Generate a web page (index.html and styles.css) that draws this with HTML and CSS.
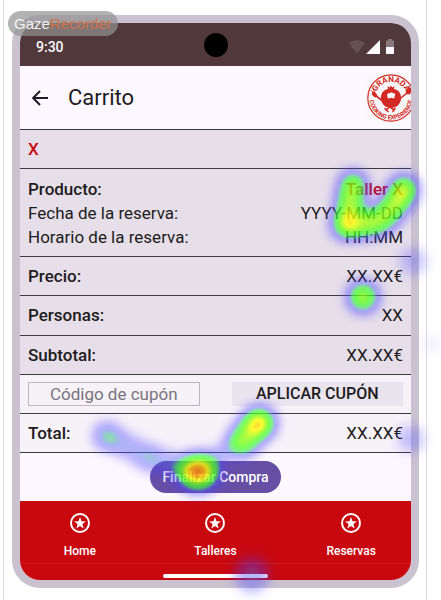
FILE: index.html
```html
<!DOCTYPE html>
<html lang="es">
<head>
<meta charset="utf-8">
<meta name="viewport" content="width=device-width, initial-scale=1">
<title>Carrito</title>
<link rel="stylesheet" href="styles.css">
</head>
<body>
<div class="stage">
  <div class="phone">
    <div class="status">
      <span class="time">9:30</span>
      <span class="camera"></span>
      <svg class="signals" viewBox="0 0 46 16" width="46" height="16" aria-hidden="true">
        <path d="M0 4Q8-2 16 4L8 15Z" fill="#665052"/>
        <path d="M31 1V15H17Z" fill="#fdf8ff"/>
        <path d="M39 0h4v1.500h2V8h-8V1.500h2Z" fill="#8a7779"/>
        <path d="M37 8h8v7h-8Z" fill="#fdf8ff"/>
      </svg>
    </div>
    <header class="topbar">
      <button class="back" type="button" aria-label="Volver">
        <svg viewBox="0 0 16 16" width="16" height="16"><path d="M16 8H1.500M8 1L1.200 8L8 15" fill="none" stroke="#1d1b20" stroke-width="1.900"/></svg>
      </button>
      <h1>Carrito</h1>
      <svg class="logo" viewBox="0 0 44 48" width="44" height="48" role="img" aria-label="Granada Cooking Experience">
        <defs>
          <path id="arc-top" d="M8 24A16 16 0 0 1 40 24"/>
          <path id="arc-bottom" d="M2.500 24A21.500 21.500 0 0 0 45.500 24"/>
        </defs>
        <rect width="44" height="48" fill="#f9f7f8"/>
        <circle cx="24" cy="24" r="23.200" fill="none" stroke="#d42a25" stroke-width="1.200"/>
        <text class="logo-top" text-anchor="middle"><textPath href="#arc-top" startOffset="50%">GRANADA</textPath></text>
        <text class="logo-bottom" text-anchor="middle"><textPath href="#arc-bottom" startOffset="50%">COOKING EXPERIENCE</textPath></text>
        <g stroke="#d42a25" stroke-width="1.600" stroke-linecap="round">
          <path d="M8 21L27 36M40 19L19 36M18 34.500l3 3M28 34.500l-2 3"/>
        </g>
        <ellipse cx="7.500" cy="20.500" rx="2" ry="3.200" transform="rotate(-40 7.500 20.500)" fill="#d42a25"/>
        <ellipse cx="42" cy="17" rx="2.600" ry="3.800" transform="rotate(35 42 17)" fill="#d42a25"/>
        <path d="M4 16l3 3M6 15l2 3" stroke="#d42a25" stroke-width=".8"/>
        <path d="M21 15l-.500-3 2.200 1.500L24 11.500l1.300 2L27.500 12 27 15C32 16 34.500 20 34 25c-.500 5-4.500 9-10 9s-9.500-4-10-9c-.500-5 2-9 7-10Z" fill="#d42a25"/>
        <path d="M20.500 22c-1.200-1.500.500-3.200 1.800-2.600.8-1.200 3.200-1.200 4 0 1.600-.400 2.700 1.600 1.200 2.800v2h-2l-1.200-.800-1.200.800h-2.400Z" fill="#fff"/>
      </svg>
    </header>
    <main>
      <div class="cart">
        <div class="row"><button class="remove" type="button" aria-label="X">X</button></div>
        <dl class="row details">
          <div><dt class="strong">Producto:</dt><dd class="accent">Taller X</dd></div>
          <div><dt>Fecha de la reserva:</dt><dd>YYYY-MM-DD</dd></div>
          <div><dt>Horario de la reserva:</dt><dd>HH:MM</dd></div>
        </dl>
        <dl class="row"><dt class="strong">Precio:</dt><dd>XX.XX€</dd></dl>
        <dl class="row"><dt class="strong">Personas:</dt><dd>XX</dd></dl>
        <dl class="row"><dt class="strong">Subtotal:</dt><dd>XX.XX€</dd></dl>
        <form class="row light coupon">
          <input type="text" placeholder="Código de cupón" aria-label="Código de cupón">
          <button type="button">APLICAR CUPÓN</button>
        </form>
        <dl class="row light"><dt class="strong">Total:</dt><dd>XX.XX€</dd></dl>
      </div>
      <button class="checkout" type="button">Finalizar Compra</button>
    </main>
    <nav>
      <div class="tabs">
        <a href="#home"><svg class="star" viewBox="0 0 20 20"><circle cx="10" cy="10" r="9"/><path d="M10 4l1.500 4.300 4.500.100-3.600 2.700 1.300 4.400L10 12.900l-3.700 2.600 1.300-4.400L4 8.400l4.500-.100Z"/></svg>Home</a>
        <a href="#talleres"><svg class="star" viewBox="0 0 20 20"><circle cx="10" cy="10" r="9"/><path d="M10 4l1.500 4.300 4.500.100-3.600 2.700 1.300 4.400L10 12.900l-3.700 2.600 1.300-4.400L4 8.400l4.500-.100Z"/></svg>Talleres</a>
        <a href="#reservas"><svg class="star" viewBox="0 0 20 20"><circle cx="10" cy="10" r="9"/><path d="M10 4l1.500 4.300 4.500.100-3.600 2.700 1.300 4.400L10 12.900l-3.700 2.600 1.300-4.400L4 8.400l4.500-.100Z"/></svg>Reservas</a>
      </div>
      <div class="gesture"><span></span></div>
    </nav>
  </div>
</div>
<svg class="heat" viewBox="0 0 441 600" aria-hidden="true">
  <defs>
    <filter id="heatmap" x="0" y="0" width="441" height="600" filterUnits="userSpaceOnUse" color-interpolation-filters="sRGB">
      <feGaussianBlur stdDeviation="7"/>
      <feColorMatrix values="0 0 0 1 0  0 0 0 1 0  0 0 0 1 0  0 0 0 1 0"/>
      <feComponentTransfer>
        <feFuncR type="table" tableValues=".3 .3 .3 .3 .25 .25 .35 .6 1 1 .9"/>
        <feFuncG type="table" tableValues=".25 .25 .25 .4 .85 1 1 1 1 .6 .1"/>
        <feFuncB type="table" tableValues="1 1 1 .95 .45 .2 .1 .05 0 0 0"/>
        <feFuncA type="table" tableValues="0 .2 .35 .45 .6 .7 .75 .78 .8 .82 .85"/>
      </feComponentTransfer>
    </filter>
  </defs>
  <g filter="url(#heatmap)" fill="none" stroke="#000" stroke-linecap="round" stroke-linejoin="round">
    <path d="M353 185L348 215L351 225L377 222L388 213L399 199L404 189" stroke-width="25" stroke-opacity=".72"/>
    <circle cx="345" cy="225" r="13" fill="#000" fill-opacity=".55" stroke="none"/>
    <circle cx="403" cy="191" r="14" fill="#000" fill-opacity=".3" stroke="none"/>
    <circle cx="363" cy="297" r="14" fill="#000" fill-opacity=".72" stroke="none"/>
    <path d="M257 424L243 441" stroke-width="28" stroke-opacity=".68"/>
    <circle cx="260" cy="423" r="15" fill="#000" fill-opacity=".62" stroke="none"/>
    <path d="M234 447L213 459" stroke-width="16" stroke-opacity=".25"/>
    <path d="M107 436L148 457L177 466" stroke-width="20" stroke-opacity=".29"/>
    <circle cx="107" cy="436" r="13" fill="#000" fill-opacity=".24" stroke="none"/>
    <circle cx="149" cy="459" r="11" fill="#000" fill-opacity=".16" stroke="none"/>
    <ellipse cx="198" cy="472" rx="21" ry="18" fill="#000" fill-opacity=".8" stroke="none"/>
    <circle cx="197" cy="471" r="9" fill="#000" stroke="none"/>
    <circle cx="252" cy="575" r="15" fill="#000" fill-opacity=".3" stroke="none"/>
    <circle cx="413" cy="261" r="12" fill="#000" fill-opacity=".2" stroke="none"/>
    <circle cx="411" cy="439" r="12" fill="#000" fill-opacity=".2" stroke="none"/>
    <circle cx="430" cy="344" r="6" fill="#000" fill-opacity=".1" stroke="none"/>
  </g>
</svg>
<div class="badge">Gaze<span>Recorder</span></div>
</body>
</html>
```
FILE: styles.css
```css
* {
  box-sizing: border-box;
}

body {
  position: relative;
  margin: 0;
  background: #fff;
  color: #1d1b20;
  font: 17px/24px Roboto, "Liberation Sans", sans-serif;
}

button,
input {
  margin: 0;
  padding: 0;
  border: 0;
  background: none;
  color: inherit;
  font: inherit;
}

.stage {
  display: flex;
  min-height: 100vh;
  margin: 0 14px 0 3px;
  padding: 15px 7px 12px 8px;
  border: solid #dcdcdc;
  border-width: 0 1px;
}

.phone {
  display: flex;
  flex: 1;
  flex-direction: column;
  overflow: hidden;
  border: 8px solid #cac2d0;
  border-radius: 28px;
  background: #fdf8ff;
}

.status {
  display: grid;
  grid-template-columns: 1fr auto 1fr;
  align-items: center;
  height: 43px;
  padding: 4px 16px 0;
  background: #51393b;
}

.time {
  color: #fdf8ff;
  font-size: 14px;
  font-weight: 500;
}

.camera {
  width: 24px;
  height: 24px;
  margin-top: -4px;
  border-radius: 50%;
  background: #000;
}

.signals {
  justify-self: end;
}

.topbar {
  display: flex;
  align-items: center;
  gap: 20px;
  height: 63px;
  padding-left: 12px;
}

.back {
  display: flex;
}

h1 {
  flex: 1;
  margin: 0;
  font-size: 22px;
  font-weight: 400;
}

.logo-top,
.logo-bottom {
  fill: #d42a25;
  font-family: Roboto, "Liberation Sans", sans-serif;
  font-weight: 700;
}

.logo-top {
  font-size: 8px;
}

.logo-bottom {
  font-size: 6px;
}

main {
  display: flex;
  flex: 1;
  flex-direction: column;
}

.cart {
  display: grid;
  flex: 1;
  grid-template-rows: 1fr 88px repeat(5, 1fr);
  border-bottom: 1px solid #3d3940;
}

.row {
  display: flex;
  align-items: center;
  justify-content: space-between;
  margin: 0;
  padding: 0 8px;
  border-top: 1px solid #3d3940;
  background: #e6dfe9;
}

.light {
  background: #f7f2f8;
}

.details {
  flex-direction: column;
  align-items: stretch;
  justify-content: center;
}

.details div {
  display: flex;
  justify-content: space-between;
}

dd {
  margin: 0;
}

.strong {
  font-weight: 500;
}

.accent,
.remove {
  color: #c8070f;
  font-weight: 500;
}

.coupon {
  display: grid;
  grid-template-columns: 1fr 1fr;
  gap: 32px;
}

.coupon input {
  width: 100%;
  height: 24px;
  border: 1px solid #bdb8c0;
  text-align: center;
}

.coupon input::placeholder {
  color: #79747e;
  opacity: 1;
}

.coupon button {
  background: #e9e4ee;
  font-size: 16px;
  font-weight: 500;
}

.checkout {
  align-self: center;
  margin: 8px;
  padding: 4px 12px;
  border-radius: 16px;
  background: #664ea5;
  color: #fff;
  font-size: 14px;
  font-weight: 500;
}

nav {
  background: #c8070f;
}

.tabs {
  display: grid;
  grid-template-columns: repeat(3, 1fr);
  gap: 16px;
  height: 63px;
  padding-top: 12px;
  border-bottom: 1px solid #d01c20;
}

.tabs a {
  display: flex;
  flex-direction: column;
  align-items: center;
  gap: 10px;
  color: #fff;
  font-size: 12px;
  font-weight: 500;
  line-height: 16px;
  text-decoration: none;
}

.star {
  width: 20px;
  height: 20px;
  fill: #fff;
}

.star circle {
  fill: none;
  stroke: #fff;
  stroke-width: 2;
}

.gesture {
  display: flex;
  justify-content: center;
  height: 16px;
  padding-top: 10px;
}

.gesture span {
  width: 27%;
  height: 4px;
  border-radius: 2px;
  background: #fff;
}

.heat {
  position: absolute;
  top: 0;
  left: 0;
  width: 100%;
  pointer-events: none;
}

.badge {
  position: absolute;
  top: 11px;
  left: 8px;
  padding: 0 6px;
  border-radius: 13px;
  background: rgba(145, 145, 145, 0.7);
  color: #f2f2f2;
  font: 15px/25px "Liberation Sans", sans-serif;
}

.badge span {
  color: #d0714a;
}
```
